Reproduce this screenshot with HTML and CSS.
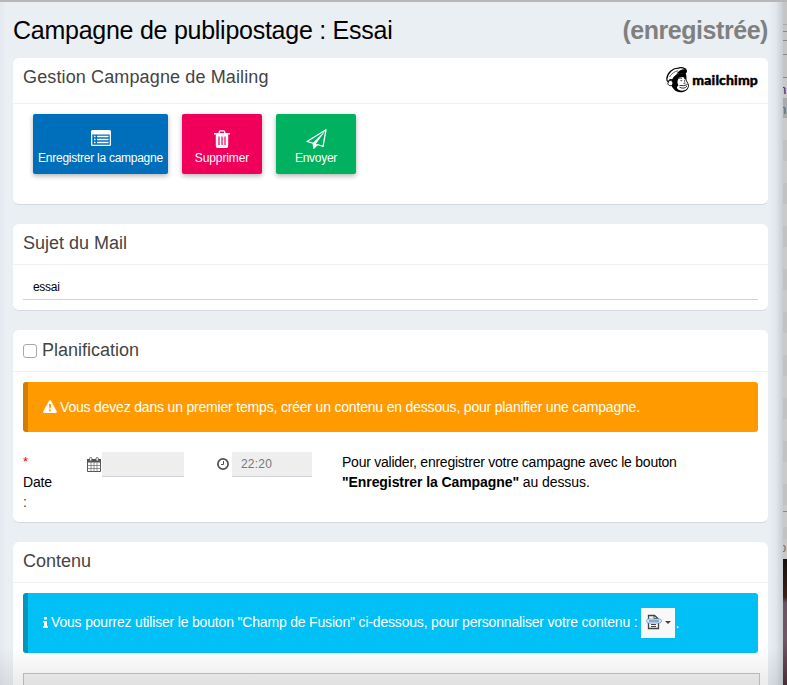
FILE: index.html
```html
<!DOCTYPE html>
<html lang="fr">
<head>
<meta charset="utf-8">
<title>Campagne de publipostage</title>
<link rel="stylesheet" href="styles.css">
</head>
<body>
<div class="screen">
  <main class="window">
    <header class="page-head">
      <h1>Campagne de publipostage : Essai</h1>
      <strong class="state">(enregistrée)</strong>
    </header>

    <section class="card card-actions">
      <div class="card-head">
        <h2 class="t-gestion">Gestion Campagne de Mailing</h2>
        <div class="brand">
          <svg width="25" height="26" viewBox="0 0 25 26">
            <path d="M6 9L5 17.500C6.500 22 10 25 14 25.300C19.500 25.500 23.500 22 22.800 17.500L20.500 13C20.500 10 20.500 8 19.500 6L10 7Z" fill="#000"/>
            <path d="M.8 12C1.200 6 7 .8 12 1.300C13.500 .5 17 .8 19.500 2L17 6C13 5.500 8.500 9 6.500 13C4.500 12 3 13 2.300 15C1.300 14.500 .8 13.500 .8 12Z" fill="#fff" stroke="#000" stroke-width="1.200"/>
            <path d="M3.500 10C5.500 6.500 8.500 4.500 12 3.800" fill="none" stroke="#000" stroke-width=".6"/>
            <path d="M10.500 6.800C12.500 3.500 17 1.300 20.500 2.500C21.800 4.500 20.500 7 17.500 6.800C15 6 12 6 10.500 6.800Z" fill="#000"/>
            <path d="M2.500 14.500C4.500 12.300 7.500 14 6.800 17C5.800 19.500 2.200 19 1.900 16.500Z" fill="#fff" stroke="#000" stroke-width=".9"/>
            <path d="M12.300 12C13.300 9.500 19.200 9 19.500 13L22 17.500C22.600 22 18.500 24.300 14.500 23.500C10.500 22.500 10 20 12.500 18.300C11 16 11.300 14 12.300 12Z" fill="#fff"/>
            <path d="M13.300 11.600Q14.500 10.700 16 11.300M18 11.300L19 12M14.500 13.700H16.200M18.500 13.300V14.700M17.500 16.300L19.500 16M13.500 18.500Q18 19.300 21.500 17.500M13.500 20.300Q18.500 22.500 21 19" fill="none" stroke="#000" stroke-width=".8"/>
          </svg>
          <span>mailchimp</span>
        </div>
      </div>
      <div class="actions">
        <button class="btn blue">
          <svg width="20" height="16" viewBox="0 0 20 16"><path fill="#fff" fill-rule="evenodd" d="M1.500 0H18.500Q20 0 20 1.500V14.500Q20 16 18.500 16H1.500Q0 16 0 14.500V1.500Q0 0 1.500 0ZM1.300 4.500V14.700H18.700V4.500Z"/><path stroke="#fff" stroke-width="1.300" d="M3 6.500H4.500M6 6.500H17.500M3 9.500H4.500M6 9.500H17.500M3 12.500H4.500M6 12.500H17.500"/></svg>
          <span class="t-save">Enregistrer la campagne</span>
        </button>
        <button class="btn red">
          <svg width="16" height="18" viewBox="0 0 16 18"><path d="M5 3.500L5.600 1.300Q5.800.8 6.400.8H9.600Q10.200.8 10.400 1.300L11 3.500" fill="none" stroke="#fff" stroke-width="1.300"/><path d="M0 3H16V4.500H14.200V15.500Q14.200 18 12.200 18H3.800Q1.800 18 1.800 15.500V4.500H0Z" fill="#fff"/><path d="M5 6.500V15M8 6.500V15M11 6.500V15" stroke="#f0005a" stroke-width="1.200"/></svg>
          <span class="t-del">Supprimer</span>
        </button>
        <button class="btn green">
          <svg width="21" height="20" viewBox="0 0 21 20"><path d="M1 12.500L20 .8L17 17.500L11.500 15.500L8 19V14.500Z" fill="none" stroke="#fff" stroke-width="1.300" stroke-linejoin="round"/><path d="M20 1L6.500 14.300L7.300 20L11 15.500L9.800 14.900Z" fill="#fff"/></svg>
          <span class="t-send">Envoyer</span>
        </button>
      </div>
    </section>

    <section class="card card-subject">
      <div class="card-head"><h2 class="t-sujet">Sujet du Mail</h2></div>
      <div class="subject"><span>essai</span></div>
    </section>

    <section class="card card-plan">
      <div class="card-head"><i class="check"></i><h2 class="t-plan">Planification</h2></div>
      <div class="alert warn">
        <svg width="14" height="13" viewBox="0 0 14 13"><path d="M6.200.5Q7 -.4 7.800.5L13.800 11.500Q14.200 12.800 13 13H1Q-.2 12.800.2 11.500Z" fill="#fff"/><path d="M6 4H8L7.700 8.500H6.300ZM6.100 9.400H7.900V11.200H6.100Z" fill="#ff9b00"/></svg>
        <span class="t-warn">Vous devez dans un premier temps, créer un contenu en dessous, pour planifier une campagne.</span>
      </div>
      <div class="schedule">
        <div class="label"><span class="star">*</span><span>Date</span><span>:</span></div>
        <div class="field date">
          <svg width="14" height="15" viewBox="0 0 14 15"><path d="M.5 2.500H13.500V14.500H.5Z" fill="#fff" stroke="#555"/><path d="M0 2H14V5.500H0Z" fill="#555"/><path d="M.5 8.500H13.500M.5 11.500H13.500M4 5V14.500M7 5V14.500M10 5V14.500" stroke="#777" stroke-width=".8"/><rect x="2.500" y=".5" width="2.400" height="3.500" rx="1" fill="#eee" stroke="#555" stroke-width=".8"/><rect x="9" y=".5" width="2.400" height="3.500" rx="1" fill="#eee" stroke="#555" stroke-width=".8"/></svg>
          <div class="input"></div>
        </div>
        <div class="field time">
          <svg width="12" height="12" viewBox="0 0 12 12"><circle cx="6" cy="6" r="5.100" fill="none" stroke="#505050" stroke-width="1.700"/><path d="M6.500 3V6.500H4" fill="none" stroke="#505050"/></svg>
          <div class="input">22:20</div>
        </div>
        <p class="hint"><span class="t-h1">Pour valider, enregistrer votre campagne avec le bouton</span><br><span class="t-h2"><b>"Enregistrer la Campagne"</b> au dessus.</span></p>
      </div>
    </section>

    <section class="card card-content">
      <div class="card-head"><h2 class="t-cont">Contenu</h2></div>
      <div class="alert info">
        <svg width="5" height="11" viewBox="0 0 5 11"><path d="M1 0H4V2.500H1ZM0 4H4V9.300H5V11H0V9.300H1V5.600H0Z" fill="#fff"/></svg>
        <span class="t-info">Vous pourrez utiliser le bouton "Champ de Fusion" ci-dessous, pour personnaliser votre contenu :</span>
        <span class="merge">
          <svg width="26" height="16" viewBox="0 0 26 16"><path d="M3.500 5V1.500H9.500L13.500 5M3.500 9V14.500H13.500V9" fill="none" stroke="#444" stroke-width="1.300"/><path d="M9 1.500V4.500H13" fill="none" stroke="#444"/><rect x="1.500" y="5" width="15" height="4" rx="2" fill="#d5e9fa" stroke="#6ba9de" stroke-width=".9"/><path d="M4 7H14" stroke="#777" stroke-width="1.200"/><path d="M6 10.500H11M6 12.500H11" stroke="#444"/><path d="M20 7H26L23 10Z" fill="#444"/></svg>
        </span><span class="dot">.</span>
      </div>
      <div class="editor"></div>
    </section>
  </main>
  <aside class="behind">
    <div class="rules"></div>
    <div class="peek navy">n</div>
    <div class="peek teal">n</div>
    <div class="bands"></div>
    <div class="peek low">p</div>
    <div class="photo"></div>
  </aside>
  <div class="fade"></div>
</div>
</body>
</html>
```
FILE: styles.css
```css
* { box-sizing: border-box; }
body { margin: 0; font-family: "Liberation Sans", Arial, sans-serif; font-size: 14px; line-height: 20px; color: #000; }
h1, h2, p { margin: 0; font-weight: 400; white-space: nowrap; }
svg { display: block; flex: none; }
.screen { position: relative; display: flex; width: 787px; height: 685px; overflow: hidden; border-top: 2px solid #b7b7b7; }
.window {
  width: 783px; flex: none; padding: 0 15px 0 13px; overflow: hidden;
  background: linear-gradient(90deg, #e5e9f0, #eaeff4 6px, #eaeff4 768px, #e1e6ec 776px, #c7ccd3 783px);
}
.page-head { display: flex; justify-content: space-between; height: 56px; line-height: 56px; }
h1 { font-size: 25px; letter-spacing: -.26px; }
.state { font-size: 25px; letter-spacing: -.45px; color: #808080; white-space: nowrap; }
.card { width: 755px; background: #fff; border-radius: 6px; margin-bottom: 19px; border-bottom: 1px solid #d3d9de; }
.card-head { display: flex; padding: 0 10px; height: 41px; border-bottom: 1px solid #f1f2f3; }
h2 { font-size: 18px; line-height: 38px; color: #444; }
.t-gestion { letter-spacing: .13px; }
.card-actions { height: 147px; }
.card-actions .card-head { height: 46px; justify-content: space-between; }
.brand { display: flex; gap: 1px; padding-top: 9px; }
.brand span { font-family: Lato, sans-serif; font-weight: 900; font-size: 14px; line-height: 25px; letter-spacing: .15px; color: #000; -webkit-text-stroke: .4px #000; }
.actions { display: flex; gap: 14px; padding: 10px 20px; }
.btn {
  display: flex; flex-direction: column; align-items: center; justify-content: flex-end;
  height: 60px; width: 80px; padding: 0 0 8px; border: 0; border-radius: 2px; color: #fff;
  font: 12px/16px "Liberation Sans", sans-serif; white-space: nowrap; box-shadow: 0 2px 5px rgba(0,0,0,.3);
}
.btn svg { margin-bottom: 2px; }
.btn.blue { width: 135px; background: #006fbb; }
.btn.blue svg { margin-bottom: 4px; }
.btn.red { background: #f0005a; }
.btn.green { background: #00b160; }
.btn.green svg { margin-bottom: 1px; }
.t-save { letter-spacing: -.26px; }
.t-del { letter-spacing: -.1px; }
.t-send { letter-spacing: -.3px; }
.card-subject { height: 87px; }
.subject { margin: 10px 10px 0; height: 25px; padding-left: 10px; border-bottom: 1px solid #d2d2d9; font-size: 12px; line-height: 25px; letter-spacing: -.3px; }
.card-plan { height: 193px; }
.card-plan .card-head { height: 42px; }
.check { width: 14px; height: 14px; margin: 14px 5px 0 0; border: 1px solid #a9a9a9; border-radius: 3px; background: #fff; }
.card-plan h2 { line-height: 40px; }
.alert { display: flex; align-items: center; margin: 10px 10px 0; padding-left: 15px; border-left: 5px solid; border-radius: 3px; color: #fff; white-space: nowrap; }
.warn { height: 50px; background: #ff9b00; border-color: #d27f00; }
.warn svg { margin: 0 3px 1px 0; }
.t-warn { letter-spacing: -.187px; }
.info { height: 60px; background: #00c0f5; border-color: #0097bc; }
.info > svg { margin: 0 3px 2px 0; }
.t-info { letter-spacing: -.18px; padding-bottom: 2px; }
.schedule { display: flex; padding: 20px 10px 0; }
.label { display: flex; flex-direction: column; width: 64px; letter-spacing: -.2px; }
.label span:last-child { color: #444; }
.star { color: #f00; font-size: 13px; }
.field { display: flex; }
.date svg { margin: 5px 1px 0 0; }
.time { margin-left: 33px; }
.time svg { margin: 6px 3px 0 0; }
.input { width: 82px; height: 25px; background: #eee; border-bottom: 1px solid #d2d2d9; padding-left: 9px; font-size: 12px; line-height: 24px; letter-spacing: .2px; color: #777; }
.time .input { width: 80px; }
.hint { margin-left: 30px; }
.t-h1 { letter-spacing: -.24px; }
.t-h2 { letter-spacing: -.08px; }
.card-content { height: 200px; }
.merge { display: flex; width: 34px; height: 30px; margin-left: 4px; padding: 6px 0 0 4px; background: #f8f8f8; }
.editor { margin: 20px 8px 0 10px; height: 60px; border: 1px solid #c4c4c4; background: #f3f3f3; }
.behind { width: 4px; overflow: hidden; background: #c8c8c8; }
.rules { height: 76px; border-bottom: 1px solid #888; background: linear-gradient(#aaa, #aaa) 0 22px/4px 1px no-repeat, linear-gradient(#888, #888) 0 29px/4px 1px no-repeat, linear-gradient(#888, #888) 0 38px/4px 1px no-repeat, linear-gradient(#888, #888) 0 52px/4px 1px no-repeat, #c5c5c5; }
.peek { height: 20px; font-size: 13px; line-height: 24px; text-indent: -4px; color: #1c1c8c; }
.teal { background: #aaa; color: #187890; }
.bands { height: 421px; background: linear-gradient(#888, #888) 0 393px/4px 1px no-repeat, repeating-linear-gradient(#cacaca 0 22px, #c2c2c2 22px 43px); }
.low { color: #876f5a; line-height: 18px; }
.photo { height: 126px; background: linear-gradient(#16100e, #3c2118 38px, #685460 44px, #705766 80px, #50323a); }
.fade { position: absolute; left: 0; right: 0; bottom: 0; height: 38px; background: linear-gradient(rgba(0,0,0,0), rgba(0,0,0,.08)); }
```
